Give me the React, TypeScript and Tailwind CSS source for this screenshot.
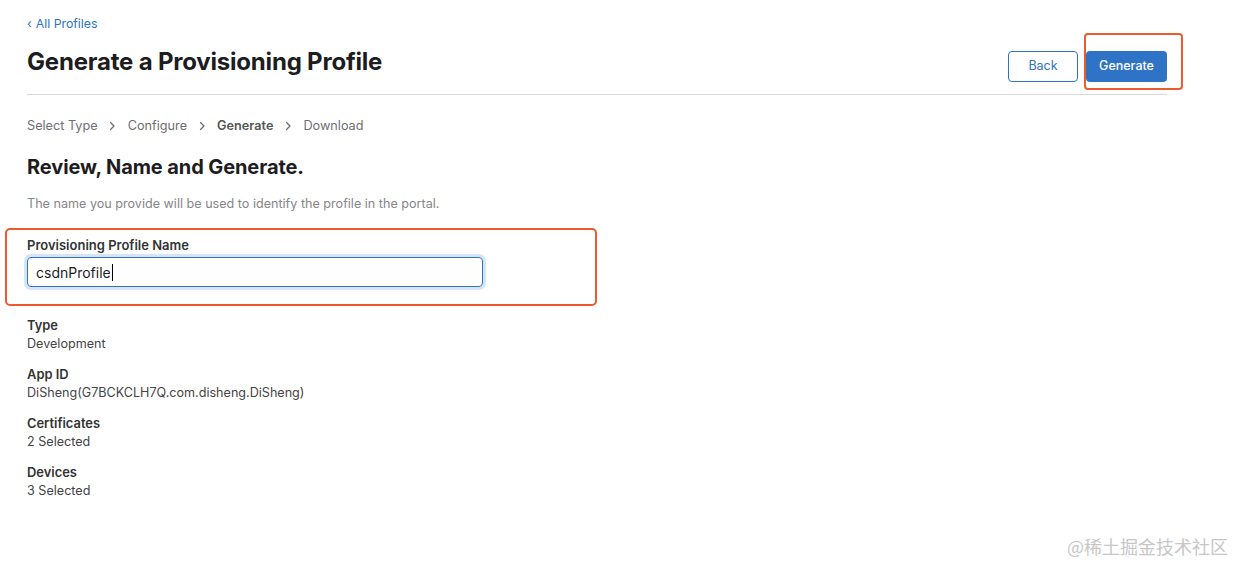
import React from "react";

const steps = [
  { label: "Select Type", active: false },
  { label: "Configure", active: false },
  { label: "Generate", active: true },
  { label: "Download", active: false },
];

const details = [
  { label: "Type", value: "Development" },
  { label: "App ID", value: "DiSheng(G7BCKCLH7Q.com.disheng.DiSheng)" },
  { label: "Certificates", value: "2 Selected" },
  { label: "Devices", value: "3 Selected" },
];

const Chevron = () => (
  <svg width="7" height="10" viewBox="0 0 7 10" className="mx-[11.5px]">
    <path d="M1.5 1.5 L5 5 L1.5 8.5" fill="none" stroke="#6e6e73" strokeWidth="1.3" strokeLinecap="round" strokeLinejoin="round" />
  </svg>
);

export default function App() {
  return (
    <div
      className="relative w-[1234px] h-[564px] bg-white overflow-hidden text-[#1d1d1f]"
      style={{ fontFamily: "Inter, 'Noto Sans', sans-serif" }}
    >
      <div className="pl-[27px] w-[1167px]">
        <div className="pt-[16px] h-[34px]">
          <a className="flex items-center gap-[4px] text-[12.3px] text-[#2a74cc] leading-[16px]">
            <span>‹</span>
            <span>All Profiles</span>
          </a>
        </div>

        <div className="flex items-center justify-between h-[61px] border-b border-[#d9d9d9]">
          <h1 className="text-[24px] font-bold tracking-[-0.2px] leading-[30px] -mt-[4px]">
            Generate a Provisioning Profile
          </h1>
          <div className="flex items-center gap-[8px] mt-[5px]">
            <button className="w-[70px] h-[31px] rounded-[4px] border border-[#2e73c6] text-[#2e73c6] text-[12.5px] bg-white">
              Back
            </button>
            <div className="relative">
              <button className="w-[81px] h-[31px] rounded-[4px] bg-[#2e73c6] text-white text-[12.5px] font-medium">
                Generate
              </button>
              <div className="absolute left-[-2px] top-[-18px] w-[99px] h-[57px] border-2 border-[#ec5a2e] rounded-[4px]" />
            </div>
          </div>
        </div>

        <div className="flex items-center h-[20px] mt-[21px] text-[12.7px] text-[#6e6e73]">
          {steps.map((s, i) => (
            <React.Fragment key={s.label}>
              {i > 0 && <Chevron />}
              <span className={s.active ? "font-semibold text-[#555]" : ""}>{s.label}</span>
            </React.Fragment>
          ))}
        </div>

        <h2 className="mt-[19px] text-[20px] font-bold leading-[24px] tracking-[-0.1px]">
          Review, Name and Generate.
        </h2>

        <p className="mt-[17px] text-[12.6px] text-[#86868b] leading-[16px]">
          The name you provide will be used to identify the profile in the portal.
        </p>

        <div className="relative mt-[25px]">
          <div className="absolute left-[-22px] top-[-9px] w-[592px] h-[78px] border-2 border-[#ec5a2e] rounded-[5px]" />
          <label className="block text-[13px] font-semibold text-[#333] leading-[16px]">
            Provisioning Profile Name
          </label>
          <div className="mt-[4px] w-[456px] h-[30px] rounded-[4px] border border-[#2e73c6] ring-[3px] ring-[#d6e4f5] flex items-center pl-[8px] text-[14px] text-[#1d1d1f]">
            csdnProfile
            <span className="inline-block w-[1px] h-[17px] bg-black ml-[1px]" />
          </div>
        </div>

        <div className="mt-[30px] flex flex-col gap-[13px]">
          {details.map((d) => (
            <div key={d.label} className="leading-[18px]">
              <div className="text-[12.9px] font-semibold text-[#333]">{d.label}</div>
              <div className="text-[12.6px] text-[#444]">{d.value}</div>
            </div>
          ))}
        </div>
      </div>

      <div
        className="absolute right-[6px] bottom-[4px] text-[18px] text-[#c7c7c7]"
        style={{ fontFamily: "'Noto Sans CJK SC', sans-serif" }}
      >
        @稀土掘金技术社区
      </div>
    </div>
  );
}
